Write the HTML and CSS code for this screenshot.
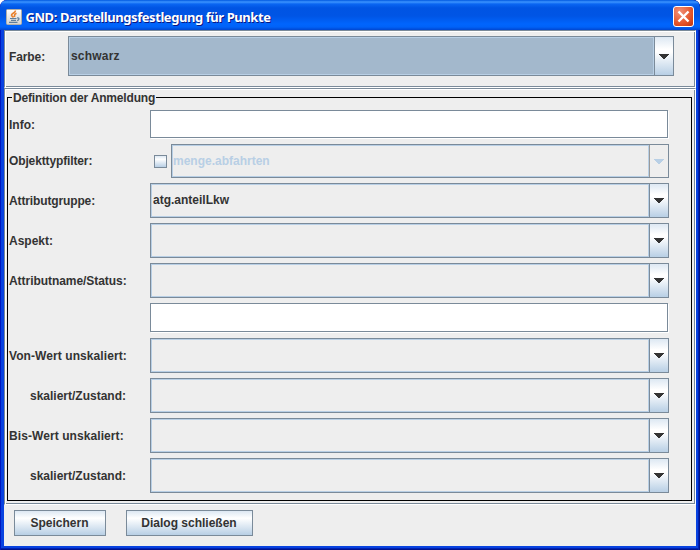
FILE: index.html
```
<!DOCTYPE html>
<html lang="de">
<head>
<meta charset="utf-8">
<title>GND: Darstellungsfestlegung für Punkte</title>
<link rel="stylesheet" href="styles.css">
</head>
<body>
<div class="window">
  <header class="titlebar">
    <svg class="java" viewBox="0 0 16 16">
      <defs><linearGradient id="jg" x1="0" y1="0" x2="0" y2="1"><stop offset="0" stop-color="#fff"/><stop offset="1" stop-color="#d4d4d0"/></linearGradient></defs>
      <rect x=".5" y=".5" width="15" height="15" rx="1" fill="url(#jg)" stroke="#b0aea8"/>
      <path d="M9.500 1.500C9.500 4 5 4.500 5.500 6.300C5.800 7.200 7 7.600 7.300 8.500M10.500 4.300C7.500 5.500 8.800 6.300 8.500 8" fill="none" stroke="#e8802c" stroke-width="1.600"/>
      <path d="M4 9.500H10.500M5 11.300H10M3 13.300H11.500M11 9C13.800 8.500 13.500 11 11 11.500" fill="none" stroke="#5f7f9c" stroke-width="1.200"/>
    </svg>
    <span class="title">GND: Darstellungsfestlegung für Punkte</span>
    <button class="close" aria-label="Schließen"><svg viewBox="0 0 19 19"><path d="M4.500 4.500L14.500 14.500M14.500 4.500L4.500 14.500" stroke="#fff" stroke-width="2.400"/></svg></button>
  </header>
  <main class="content">
    <section class="etched color-panel">
      <label class="caption">Farbe:</label>
      <div class="combo filled"><span class="value">schwarz</span><span class="arrow"><svg viewBox="0 0 10 5"><path d="M0 0h10v1h-1v1h-1v1h-1v1h-1v1h-2v-1h-1v-1h-1v-1h-1v-1h-1z"/></svg></span></div>
    </section>
    <section class="etched definition">
      <fieldset class="group">
        <legend>Definition der Anmeldung</legend>
        <div class="form">
          <label>Info:</label><div class="text short"></div>
          <label class="tight">Objekttypfilter:</label>
          <div class="filter"><i class="check"></i><div class="combo disabled"><span class="value">menge.abfahrten</span><span class="arrow"><svg viewBox="0 0 10 5"><path d="M0 0h10v1h-1v1h-1v1h-1v1h-1v1h-2v-1h-1v-1h-1v-1h-1v-1h-1z"/></svg></span></div></div>
          <label class="tight">Attributgruppe:</label><div class="combo"><span class="value">atg.anteilLkw</span><span class="arrow"><svg viewBox="0 0 10 5"><path d="M0 0h10v1h-1v1h-1v1h-1v1h-1v1h-2v-1h-1v-1h-1v-1h-1v-1h-1z"/></svg></span></div>
          <label>Aspekt:</label><div class="combo"><span class="value"></span><span class="arrow"><svg viewBox="0 0 10 5"><path d="M0 0h10v1h-1v1h-1v1h-1v1h-1v1h-2v-1h-1v-1h-1v-1h-1v-1h-1z"/></svg></span></div>
          <label class="snug">Attributname/Status:</label><div class="combo"><span class="value"></span><span class="arrow"><svg viewBox="0 0 10 5"><path d="M0 0h10v1h-1v1h-1v1h-1v1h-1v1h-2v-1h-1v-1h-1v-1h-1v-1h-1z"/></svg></span></div>
          <span></span><div class="text"></div>
          <label class="loose">Von-Wert unskaliert:</label><div class="combo"><span class="value"></span><span class="arrow"><svg viewBox="0 0 10 5"><path d="M0 0h10v1h-1v1h-1v1h-1v1h-1v1h-2v-1h-1v-1h-1v-1h-1v-1h-1z"/></svg></span></div>
          <label class="indent">skaliert/Zustand:</label><div class="combo"><span class="value"></span><span class="arrow"><svg viewBox="0 0 10 5"><path d="M0 0h10v1h-1v1h-1v1h-1v1h-1v1h-2v-1h-1v-1h-1v-1h-1v-1h-1z"/></svg></span></div>
          <label class="loose">Bis-Wert unskaliert:</label><div class="combo"><span class="value"></span><span class="arrow"><svg viewBox="0 0 10 5"><path d="M0 0h10v1h-1v1h-1v1h-1v1h-1v1h-2v-1h-1v-1h-1v-1h-1v-1h-1z"/></svg></span></div>
          <label class="indent">skaliert/Zustand:</label><div class="combo"><span class="value"></span><span class="arrow"><svg viewBox="0 0 10 5"><path d="M0 0h10v1h-1v1h-1v1h-1v1h-1v1h-2v-1h-1v-1h-1v-1h-1v-1h-1z"/></svg></span></div>
        </div>
      </fieldset>
    </section>
    <footer class="actions"><button class="save">Speichern</button><button class="dismiss">Dialog schließen</button></footer>
  </main>
</div>
</body>
</html>
```
FILE: styles.css
```
* { box-sizing: border-box; }
body { margin: 0; background: #fff; font: bold 12px/14px "Liberation Sans", Arial, sans-serif; color: #333; }
.window { width: 700px; height: 550px; padding: 0 4px 4px; display: flex; flex-direction: column; border-radius: 7px 7px 0 0; background: #0842e0; box-shadow: inset 1px 0 #0018c0, inset -1px 0 #00138c, inset -2px 0 #0022b4, inset 0 -1px #00138c, inset 0 -2px #0022b4; overflow: hidden; }
.titlebar { height: 30px; flex: none; margin: 0 -4px; padding: 3px 6px 0; display: flex; align-items: center; border-radius: 7px 7px 0 0; background: linear-gradient(#0058e0 0, #3c94ff 2px, #0a66f2 4px, #0054e3 8px, #0055e5 16px, #0065fd 24px, #0062f8 27px, #0046d0 30px); }
.java { width: 16px; height: 16px; }
.title { flex: 1; margin-left: 3.5px; color: #fff; font: bold 13px/16px "Noto Sans", sans-serif; letter-spacing: -0.43px; text-shadow: 1px 1px #0a1883; white-space: nowrap; }
.close { width: 21px; height: 21px; padding: 0; border: 1px solid #fff; border-radius: 3px; background: radial-gradient(circle at 30% 25%, #f09078, #e25025 65%, #b83410); }
.close svg { display: block; width: 19px; height: 19px; }
.content { flex: 1; display: flex; flex-direction: column; background: #eee; }
.etched { border: 1px solid #7a8a99; border-right-color: #fff; border-bottom-color: #fff; box-shadow: inset 1px 1px #fff, inset -1px -1px #7a8a99; }
.color-panel { height: 58px; flex: none; display: flex; align-items: flex-start; padding: 5px 21px 0 4px; }
.caption { width: 59px; line-height: 42px; letter-spacing: -0.1px; }
.combo { flex: 1; height: 35px; display: flex; border: 1px solid #7a8a99; }
.value { flex: 1; display: flex; align-items: center; padding: 0 0 1px 1px; border: 1px solid #b8cfe5; }
.arrow { width: 19px; border-left: 1px solid #7a8a99; display: flex; align-items: center; justify-content: center; background: linear-gradient(#dde8f3 0, #fff 32%, #fff 40%, #b8cfe5 100%); }
.arrow svg { width: 10px; height: 5px; fill: #333; }
.filled { height: 40px; }
.filled .value { background: #a3b8cc; letter-spacing: 0.2px; }
.definition { height: 417px; flex: none; padding: 2px 3px 2px 2px; }
.group { margin: 0; padding: 0; border: 1px solid #000; height: 410px; min-width: 0; }
.group legend { margin-left: 4px; padding: 0 1px; line-height: 14px; height: 13px; letter-spacing: -0.17px; }
.form { margin-top: 6px; display: grid; grid-template-columns: 142px 519px; grid-template-rows: 29px 34px 35px 35px 35px 30px 35px 35px 35px 35px; row-gap: 5px; align-items: center; }
.form label { padding-left: 1px; }
.form .tight { letter-spacing: -0.13px; }
.form .snug { letter-spacing: -0.05px; }
.form .loose { letter-spacing: 0.08px; }
.form .indent { padding-left: 22px; }
.text { align-self: start; width: 518px; height: 29px; border: 1px solid #7a8a99; background: #fff; box-shadow: 1px 1px #fff; }
.short { height: 28px; }
.filter { display: flex; align-items: center; }
.check { width: 13px; height: 13px; margin: 0 4px; border: 1px solid #7a8a99; background: linear-gradient(#dde8f3, #fff 30%, #b8cfe5); }
.disabled { height: 34px; color: #b8cfe5; }
.disabled .value { padding-left: 0; }
.disabled .arrow { background: #eee; border-color: #999; }
.disabled .arrow svg { fill: #b8cfe5; }
.actions { display: flex; gap: 20px; padding: 5px 10px; }
.actions button { height: 26px; padding: 0 1px 0 0; border: 1px solid #7a8a99; font: inherit; color: #333; background: linear-gradient(#dde8f3, #fff 30%, #b8cfe5); }
.save { width: 92px; }
.dismiss { width: 127px; }
```
